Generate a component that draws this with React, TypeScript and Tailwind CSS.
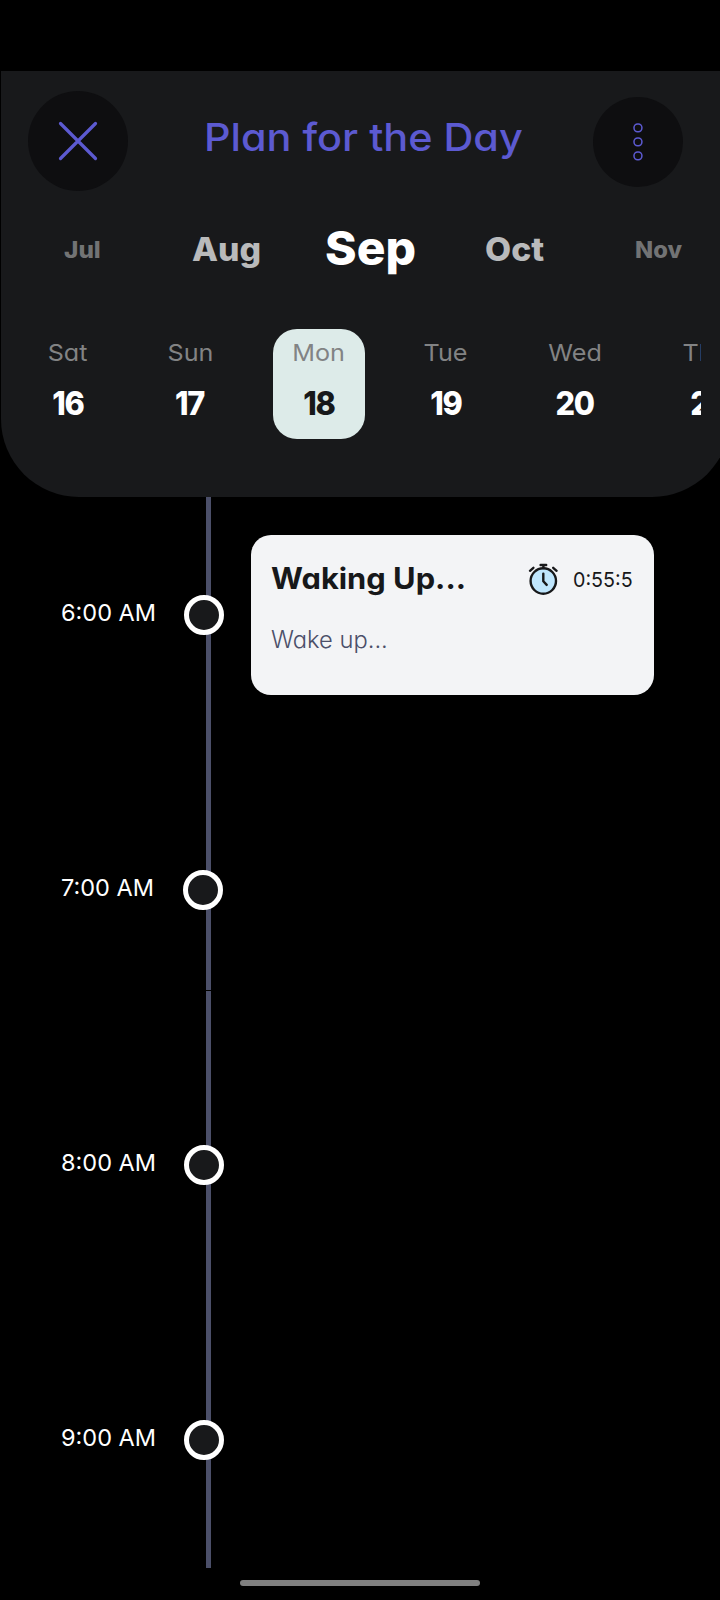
type Month = { name: string; box: string; style: string };
type Day = { name: string; date: string; box: string; active?: boolean };
type Slot = {
  time: string;
  dot: string;
  seam?: boolean;
  task?: { title: string; note: string; duration: string };
};

const months: Month[] = [
  { name: "Jul", box: "ml-[63px] w-[128px]", style: "pt-[5px] text-[23px] scale-x-[1.06] text-[#727374]" },
  { name: "Aug", box: "w-[133px]", style: "pt-[5px] text-[32.5px] scale-x-[1.04] text-[#b9babb]" },
  { name: "Sep", box: "w-[160px]", style: "pt-[2px] text-[47px] scale-x-[1.02] text-white" },
  { name: "Oct", box: "w-[150px]", style: "pt-[5px] text-[32.5px] scale-x-[1.04] text-[#b9babb]" },
  { name: "Nov", box: "w-[60px]", style: "pt-[5px] text-[23px] scale-x-[1.03] text-[#727374]" },
];

const days: Day[] = [
  { name: "Sat", date: "16", box: "w-[80px]" },
  { name: "Sun", date: "17", box: "ml-[42px] w-[80px]" },
  { name: "Mon", date: "18", box: "ml-[43px] w-[92px]", active: true },
  { name: "Tue", date: "19", box: "ml-[41px] w-[80px]" },
  { name: "Wed", date: "20", box: "ml-[49px] w-[80px]" },
  { name: "Thu", date: "21", box: "ml-[50px] w-[80px]" },
];

const slots: Slot[] = [
  {
    time: "6:00 AM",
    dot: "left-[-22px]",
    task: { title: "Waking Up...", note: "Wake up...", duration: "0:55:5" },
  },
  { time: "7:00 AM", dot: "left-[-23px]" },
  { time: "8:00 AM", dot: "left-[-22px]", seam: true },
  { time: "9:00 AM", dot: "left-[-22px]" },
];

function CloseIcon() {
  return (
    <svg width="40" height="40" viewBox="0 0 40 40" fill="none" stroke="#5c5ad1" strokeWidth="3.2" strokeLinecap="round">
      <path d="M2.5 2.5L37.5 37.5M37.5 2.5L2.5 37.5" />
    </svg>
  );
}

function MoreIcon() {
  return (
    <svg width="12" height="40" viewBox="0 0 12 40" fill="none" stroke="#5c5ad1" strokeWidth="1.5">
      <rect x="2" y="1.9" width="7.9" height="7.8" rx="3.6" />
      <rect x="2" y="15.9" width="7.9" height="7.8" rx="3.6" />
      <rect x="2" y="29.9" width="7.9" height="7.8" rx="3.6" />
    </svg>
  );
}

function AlarmIcon() {
  return (
    <svg width="32" height="34" viewBox="0 0 32 34" fill="none" stroke="#17181a" strokeWidth="2.4" strokeLinecap="round" strokeLinejoin="round">
      <circle cx="15.3" cy="19" r="12.7" fill="#bfe6fd" />
      <path d="M15.3 11.6v7.6l3.4 3.7" />
      <path d="M12.6 3h5.6M15.4 3v3" />
      <path d="M2 8.8L5.4 5.8M28.6 8.8L25.2 5.8" />
    </svg>
  );
}

function Header() {
  return (
    <header className="ml-px mt-[71px] flex h-[426px] w-[729px] shrink-0 flex-col rounded-b-[78px] bg-[#18191b]">
      <div className="flex h-[140px] items-center pl-[27px]">
        <button className="flex size-[100px] items-center justify-center rounded-full bg-[#0e0e10]">
          <CloseIcon />
        </button>
        <h1 className="ml-[76px] w-[389px] origin-left scale-x-[1.075] whitespace-nowrap pb-2 text-[38.5px] font-[450] leading-[48px] text-[#5c5ad1]">
          Plan for the Day
        </h1>
        <button className="mt-[2px] flex size-[90px] items-center justify-center rounded-full bg-[#0e0e10]">
          <MoreIcon />
        </button>
      </div>

      <nav className="mt-[6px] flex h-[60px] items-center font-extrabold leading-[60px]">
        {months.map((m) => (
          <div key={m.name} className={m.box}>
            <div className={`origin-left ${m.style}`}>{m.name}</div>
          </div>
        ))}
      </nav>

      <div className="ml-[27px] mt-[52px] flex h-[110px] w-[673px] overflow-hidden">
        {days.map((d) => (
          <div
            key={d.name}
            className={`flex shrink-0 flex-col items-center rounded-[24px] pt-[8px] ${d.box} ${
              d.active ? "bg-[#ddebe9]" : ""
            }`}
          >
            <span className="scale-x-[1.07] text-[23.5px] leading-[32px] text-[#828384]">{d.name}</span>
            <span
              className={`mt-[14px] scale-x-[0.93] text-[33px] font-extrabold leading-[40px] tracking-[-1.4px] ${
                d.active ? "text-[#17181a]" : "text-white"
              }`}
            >
              {d.date}
            </span>
          </div>
        ))}
      </div>
    </header>
  );
}

function TimelineRow({ slot }: { slot: Slot }) {
  return (
    <div className={`flex h-[275px] shrink-0 last:h-[303px] ${slot.seam ? "pt-px" : ""}`}>
      <div
        className={`w-[206px] whitespace-nowrap pl-[61px] text-[23.5px] leading-[30px] text-white ${
          slot.seam ? "pt-[157px]" : "pt-[158px]"
        }`}
      >
        {slot.time}
      </div>
      <div className="relative w-[5px] bg-[#4b4f69]">
        <span
          className={`absolute size-10 rounded-full border-[5px] border-white bg-[#18191b] ${slot.dot} ${
            slot.seam ? "top-[154px]" : "top-[155px]"
          }`}
        />
      </div>
      {slot.task && (
        <article className="ml-10 mt-[95px] h-[160px] w-[403px] rounded-[20px] bg-[#f3f4f6] pl-[19.5px] pr-[21px] pt-[24px]">
          <div className="flex h-[40px] items-center justify-between">
            <h2 className="origin-left scale-x-[1.045] whitespace-nowrap pb-[2px] text-[29.5px] font-bold leading-[40px] text-[#17181a]">
              {slot.task.title}
            </h2>
            <div className="flex items-center">
              <AlarmIcon />
              <span className="ml-[13px] w-[60px] origin-left scale-x-[0.96] whitespace-nowrap pt-px text-[20.5px] leading-[30px] text-[#17181a]">
                {slot.task.duration}
              </span>
            </div>
          </div>
          <p className="mt-[25px] origin-left scale-x-[1.01] whitespace-nowrap text-[23.5px] font-light leading-[32px] text-[#4b4f69]">
            {slot.task.note}
          </p>
        </article>
      )}
    </div>
  );
}

export default function App() {
  return (
    <div className="flex h-[1600px] w-[720px] flex-col overflow-hidden bg-black font-[Inter,sans-serif] [font-feature-settings:'cv11']">
      <Header />
      <main className="h-[1071px] shrink-0 overflow-hidden">
        <div className="-mt-[57px] flex flex-col">
          {slots.map((s) => (
            <TimelineRow key={s.time} slot={s} />
          ))}
        </div>
      </main>
      <div className="ml-[240px] mt-3 h-[6px] w-[240px] rounded-full bg-[#808080]" />
    </div>
  );
}
